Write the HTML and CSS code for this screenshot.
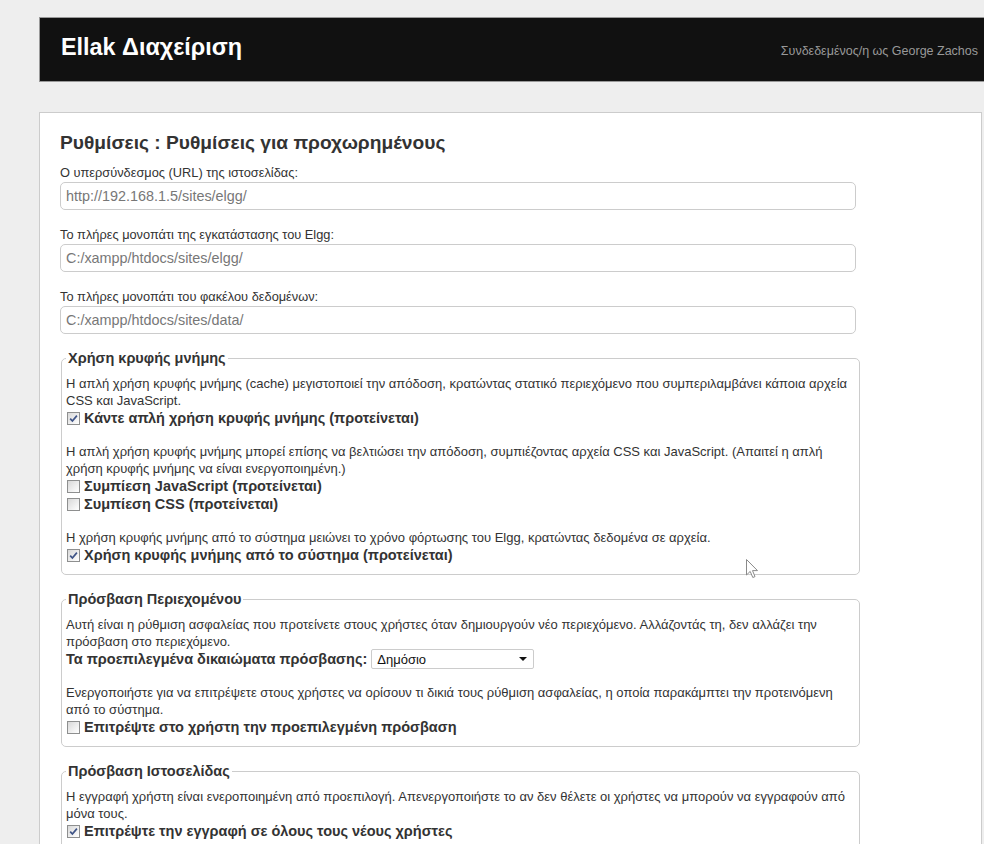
FILE: index.html
```html
<!DOCTYPE html>
<html lang="el">
<head>
<meta charset="utf-8">
<title>Ellak Διαχείριση</title>
<link rel="stylesheet" href="styles.css">
</head>
<body>
<header class="topbar">
  <h1 class="brand">Ellak Διαχείριση</h1>
  <div class="user">Συνδεδεμένος/η ως George Zachos</div>
</header>

<main class="panel">
  <h2 class="title">Ρυθμίσεις : Ρυθμίσεις για προχωρημένους</h2>

  <div class="field">
    <label class="field-label">Ο υπερσύνδεσμος (URL) της ιστοσελίδας:</label>
    <div class="input">http://192.168.1.5/sites/elgg/</div>
  </div>
  <div class="field">
    <label class="field-label">Το πλήρες μονοπάτι της εγκατάστασης του Elgg:</label>
    <div class="input">C:/xampp/htdocs/sites/elgg/</div>
  </div>
  <div class="field">
    <label class="field-label">Το πλήρες μονοπάτι του φακέλου δεδομένων:</label>
    <div class="input">C:/xampp/htdocs/sites/data/</div>
  </div>

  <fieldset class="box">
    <legend>Χρήση κρυφής μνήμης</legend>
    <div class="group">
      <p>Η απλή χρήση κρυφής μνήμης (cache) μεγιστοποιεί την απόδοση, κρατώντας στατικό περιεχόμενο που συμπεριλαμβάνει κάποια αρχεία<br>CSS και JavaScript.</p>
      <div class="check"><span class="cb"><svg viewBox="0 0 11 11" width="11" height="11"><path d="M2.2 5.6 L4.4 8 L8.9 2.6" fill="none" stroke="#3f5487" stroke-width="1.7"/></svg></span>Κάντε απλή χρήση κρυφής μνήμης (προτείνεται)</div>
    </div>
    <div class="group">
      <p>Η απλή χρήση κρυφής μνήμης μπορεί επίσης να βελτιώσει την απόδοση, συμπιέζοντας αρχεία CSS και JavaScript. (Απαιτεί η απλή<br>χρήση κρυφής μνήμης να είναι ενεργοποιημένη.)</p>
      <div class="check"><span class="cb"></span>Συμπίεση JavaScript (προτείνεται)</div>
      <div class="check"><span class="cb"></span>Συμπίεση CSS (προτείνεται)</div>
    </div>
    <div class="group">
      <p>Η χρήση κρυφής μνήμης από το σύστημα μειώνει το χρόνο φόρτωσης του Elgg, κρατώντας δεδομένα σε αρχεία.</p>
      <div class="check"><span class="cb"><svg viewBox="0 0 11 11" width="11" height="11"><path d="M2.2 5.6 L4.4 8 L8.9 2.6" fill="none" stroke="#3f5487" stroke-width="1.7"/></svg></span>Χρήση κρυφής μνήμης από το σύστημα (προτείνεται)</div>
    </div>
  </fieldset>

  <fieldset class="box">
    <legend>Πρόσβαση Περιεχομένου</legend>
    <div class="group">
      <p>Αυτή είναι η ρύθμιση ασφαλείας που προτείνετε στους χρήστες όταν δημιουργούν νέο περιεχόμενο. Αλλάζοντάς τη, δεν αλλάζει την<br>πρόσβαση στο περιεχόμενο.</p>
      <div class="check">Τα προεπιλεγμένα δικαιώματα πρόσβασης:<span class="select"><span>Δημόσιο</span><svg viewBox="0 0 8 4" width="8" height="4"><path d="M0 0 H8 L4 4 Z" fill="#111"/></svg></span></div>
    </div>
    <div class="group">
      <p>Ενεργοποιήστε για να επιτρέψετε στους χρήστες να ορίσουν τι δικιά τους ρύθμιση ασφαλείας, η οποία παρακάμπτει την προτεινόμενη<br>από το σύστημα.</p>
      <div class="check"><span class="cb"></span>Επιτρέψτε στο χρήστη την προεπιλεγμένη πρόσβαση</div>
    </div>
  </fieldset>

  <fieldset class="box">
    <legend>Πρόσβαση Ιστοσελίδας</legend>
    <div class="group">
      <p>Η εγγραφή χρήστη είναι ενεροποιημένη από προεπιλογή. Απενεργοποιήστε το αν δεν θέλετε οι χρήστες να μπορούν να εγγραφούν από<br>μόνα τους.</p>
      <div class="check"><span class="cb"><svg viewBox="0 0 11 11" width="11" height="11"><path d="M2.2 5.6 L4.4 8 L8.9 2.6" fill="none" stroke="#3f5487" stroke-width="1.7"/></svg></span>Επιτρέψτε την εγγραφή σε όλους τους νέους χρήστες</div>
    </div>
  </fieldset>
</main>

<svg class="cursor" width="13" height="20" viewBox="0 0 13 20"><path d="M0.5 0.5 V16 L4.2 12.4 L6.8 18.5 L9 17.6 L6.5 11.6 H11.5 Z" fill="#fff" stroke="#8a8a8a" stroke-width="1"/></svg>
</body>
</html>
```

FILE: styles.css
```css
html {
  overflow: hidden;
}

body {
  margin: 0;
  background: #eeeeee;
  font-family: "Liberation Sans", Arial, sans-serif;
  font-size: 13px;
  line-height: 17px;
  color: #333;
  position: relative;
}

.topbar {
  box-sizing: border-box;
  height: 65px;
  margin: 17px 0 0 39px;
  padding: 15px 6px 0 21px;
  background: #111;
  border: 1px solid #999;
  border-right: 0;
  display: flex;
  justify-content: space-between;
  align-items: baseline;
}

.brand {
  margin: 0;
  font-size: 23.4px;
  line-height: 28px;
  font-weight: bold;
  color: #fff;
}

.user {
  font-size: 12.5px;
  color: #999;
}

.panel {
  margin: 30px 2px 0 39px;
  padding: 20px 20px 60px 20px;
  background: #fff;
  border: 1px solid #ccc;
}

.title {
  margin: 0 0 11px;
  font-size: 19.2px;
  line-height: 20px;
  font-weight: bold;
  color: #333;
}

.field {
  margin-bottom: 16px;
}

.field-label {
  display: block;
  font-size: 12.8px;
  line-height: 17px;
}

.input {
  box-sizing: border-box;
  width: 796px;
  height: 28px;
  margin-top: 1px;
  padding: 0 5px;
  border: 1px solid #ccc;
  border-radius: 5px;
  font-size: 14.4px;
  line-height: 26px;
  color: #777;
  white-space: nowrap;
}

.box {
  box-sizing: border-box;
  width: 799px;
  min-width: 0;
  margin: 0 0 16px 1px;
  padding: 8px 4px 10px;
  border: 1px solid #ccc;
  border-radius: 5px;
}

.box legend {
  padding: 0 2px;
  font-size: 14.5px;
  line-height: 17px;
  font-weight: bold;
  color: #333;
}

.group {
  margin-bottom: 16px;
}

.group:last-child {
  margin-bottom: 0;
}

.group p {
  margin: 0;
  white-space: nowrap;
}

.check {
  display: flex;
  align-items: center;
  height: 18px;
  font-size: 14.5px;
  font-weight: bold;
  white-space: nowrap;
}

.cb {
  box-sizing: border-box;
  width: 13px;
  height: 13px;
  margin: 0 4px 0 1px;
  border: 1px solid #8e8f8f;
  background: linear-gradient(135deg, #d8d8d8 0%, #f0f0f0 60%, #ffffff 100%);
  display: flex;
  align-items: center;
  justify-content: center;
  flex: none;
}

.cb svg {
  display: block;
}

.select {
  box-sizing: border-box;
  width: 163px;
  height: 20px;
  margin-left: 4px;
  padding: 0 6px 0 5px;
  border: 1px solid #ccc;
  border-radius: 2px;
  background: #fff;
  display: flex;
  align-items: center;
  justify-content: space-between;
  font-size: 13px;
  font-weight: normal;
  color: #111;
}

.cursor {
  position: absolute;
  left: 746px;
  top: 559px;
}
```
